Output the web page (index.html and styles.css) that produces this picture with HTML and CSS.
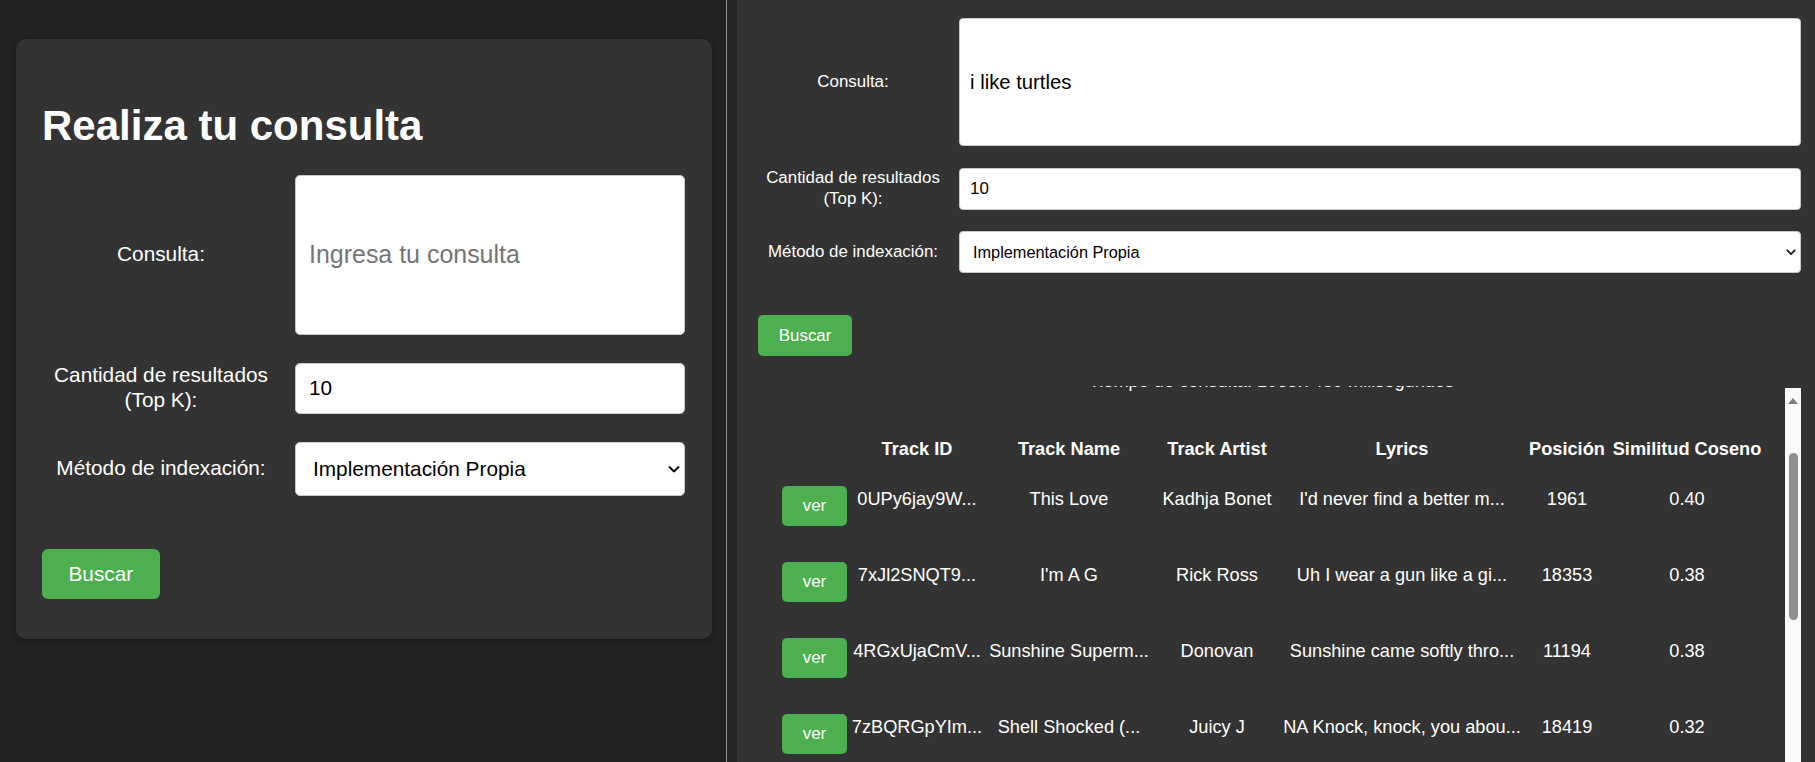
FILE: index.html
```html
<!DOCTYPE html>
<html lang="es">
<head>
<meta charset="utf-8">
<title>Realiza tu consulta</title>
<link rel="stylesheet" href="styles.css">
</head>
<body>
<div class="app">
  <section class="pane-left">
    <div class="card">
      <h1 class="card-title">Realiza tu consulta</h1>
      <form class="form form-lg">
        <label class="form-label" for="q1">Consulta:</label>
        <input class="field field-query" id="q1" type="text" placeholder="Ingresa tu consulta">
        <label class="form-label" for="k1">Cantidad de resultados (Top K):</label>
        <input class="field" id="k1" type="text" value="10">
        <label class="form-label" for="m1">Método de indexación:</label>
        <div class="select-wrap">
          <select class="field field-select" id="m1"><option>Implementación Propia</option></select>
          <svg class="chevron chevron-lg" viewBox="0 0 12 7" aria-hidden="true"><path d="M1 1l5 5 5-5" fill="none" stroke="#111" stroke-width="2"/></svg>
        </div>
      </form>
      <button class="btn btn-lg" type="button">Buscar</button>
    </div>
  </section>
  <div class="divider"></div>
  <div class="gutter"></div>
  <section class="pane-right">
    <form class="form form-sm">
      <label class="form-label" for="q2">Consulta:</label>
      <input class="field field-query" id="q2" type="text" value="i like turtles">
      <label class="form-label" for="k2">Cantidad de resultados (Top K):</label>
      <input class="field" id="k2" type="text" value="10">
      <label class="form-label" for="m2">Método de indexación:</label>
      <div class="select-wrap">
        <select class="field field-select" id="m2"><option>Implementación Propia</option></select>
        <svg class="chevron chevron-sm" viewBox="0 0 12 7" aria-hidden="true"><path d="M1 1l5 5 5-5" fill="none" stroke="#111" stroke-width="2"/></svg>
      </div>
    </form>
    <button class="btn btn-sm" type="button">Buscar</button>
    <div class="results">
      <p class="timing">Tiempo de consulta: 1068.7459 milisegundos</p>
      <table class="results-table">
        <colgroup>
          <col class="col-action">
          <col class="col-id">
          <col class="col-name">
          <col class="col-artist">
          <col class="col-lyrics">
          <col class="col-pos">
          <col class="col-sim">
        </colgroup>
        <thead>
          <tr><th></th><th>Track ID</th><th>Track Name</th><th>Track Artist</th><th>Lyrics</th><th>Posición</th><th>Similitud Coseno</th></tr>
        </thead>
        <tbody>
          <tr><td><button class="btn btn-view" type="button">ver</button></td><td>0UPy6jay9W...</td><td>This Love</td><td>Kadhja Bonet</td><td>I'd never find a better m...</td><td>1961</td><td>0.40</td></tr>
          <tr><td><button class="btn btn-view" type="button">ver</button></td><td>7xJl2SNQT9...</td><td>I'm A G</td><td>Rick Ross</td><td>Uh I wear a gun like a gi...</td><td>18353</td><td>0.38</td></tr>
          <tr><td><button class="btn btn-view" type="button">ver</button></td><td>4RGxUjaCmV...</td><td>Sunshine Superm...</td><td>Donovan</td><td>Sunshine came softly thro...</td><td>11194</td><td>0.38</td></tr>
          <tr><td><button class="btn btn-view" type="button">ver</button></td><td>7zBQRGpYIm...</td><td>Shell Shocked (...</td><td>Juicy J</td><td>NA Knock, knock, you abou...</td><td>18419</td><td>0.32</td></tr>
        </tbody>
      </table>
      <div class="scrollbar" aria-hidden="true">
        <span class="scrollbar-arrow"></span>
        <span class="scrollbar-thumb"></span>
      </div>
    </div>
  </section>
</div>
</body>
</html>
```

FILE: styles.css
```css
* { box-sizing: border-box; }

html, body {
  margin: 0;
  height: 100%;
}

body {
  background: #232323;
  color: #fff;
  font-family: "Liberation Sans", Arial, sans-serif;
  overflow: hidden;
}

.app {
  display: flex;
  height: 100vh;
}

/* ---------- left pane ---------- */
.pane-left {
  width: 726px;
  flex: none;
  padding: 39px 14px 0 16px;
}

.divider {
  width: 1px;
  flex: none;
  background: #8c8c8c;
}

.gutter {
  width: 10px;
  flex: none;
  background: #272727;
}

.card {
  background: #333333;
  border-radius: 10px;
  box-shadow: 0 2px 10px rgba(0, 0, 0, 0.35);
  padding: 62.5px 27px 40px 26px;
}

.card-title {
  margin: 0 0 25.3px;
  font-size: 42px;
  font-weight: bold;
  line-height: normal;
}

/* ---------- forms ---------- */
.form {
  display: grid;
  align-items: center;
}

.form-lg {
  grid-template-columns: 238px 1fr;
  grid-template-rows: 160px 51px 54px;
  column-gap: 15px;
  row-gap: 28px;
  font-size: 20.8px;
}

.form-sm {
  grid-template-columns: 190px 1fr;
  grid-template-rows: 128px 42px 42px;
  column-gap: 11px;
  row-gap: 21.5px;
  font-size: 16.9px;
}

.form-label {
  text-align: center;
  line-height: 1.2;
}

.field {
  display: block;
  width: 100%;
  height: 100%;
  margin: 0;
  background: #fff;
  color: #000;
  border: 1px solid #c8c8c8;
  font-family: inherit;
  font-size: inherit;
  outline: none;
}

.form-lg .field {
  border-radius: 5px;
  padding: 0 13px;
}

.form-sm .field {
  border-radius: 4px;
  padding: 0 10px;
}

.field-query {
  font-size: 1.2em;
}

.field::placeholder {
  color: #757575;
}

.select-wrap {
  position: relative;
  height: 100%;
}

.field-select {
  -webkit-appearance: none;
  appearance: none;
}

.form-lg .field-select {
  padding-left: 17px;
}

.form-sm .field-select {
  padding-left: 13px;
  font-size: 16.3px;
}

.chevron {
  position: absolute;
  top: 50%;
  transform: translateY(-50%);
  pointer-events: none;
}

.chevron-lg {
  right: 5px;
  width: 12px;
  height: 7px;
}

.chevron-sm {
  right: 5px;
  width: 10px;
  height: 6px;
}

/* ---------- buttons ---------- */
.btn {
  display: block;
  background: #4caf50;
  color: #fff;
  border: none;
  border-radius: 5px;
  font-family: inherit;
  line-height: normal;
  cursor: pointer;
}

.btn-lg {
  margin-top: 53px;
  height: 50px;
  padding: 0 26.5px;
  font-size: 20.8px;
  border-radius: 6px;
}

.btn-sm {
  align-self: flex-start;
  margin-top: 42px;
  height: 41px;
  padding: 0 20.8px;
  font-size: 16.9px;
}

.btn-view {
  margin: 13px auto 0;
  height: 40px;
  padding: 0 20.8px;
  font-size: 16.9px;
}

/* ---------- right pane ---------- */
.pane-right {
  flex: 1;
  min-width: 0;
  background: #333333;
  padding: 18px 14px 0 21px;
  display: flex;
  flex-direction: column;
}

.results {
  position: relative;
  flex: 1;
  min-height: 0;
  overflow: hidden;
  margin-top: 30px;
  padding-right: 16px;
}

.timing {
  margin: -15px 0 46px;
  text-align: center;
  font-size: 18.2px;
  line-height: normal;
}

.results-table {
  margin: 0 auto;
  width: 987px;
  table-layout: fixed;
  border-collapse: collapse;
  font-size: 18.2px;
}

.col-action { width: 73px; }
.col-id { width: 132px; }
.col-name { width: 172px; }
.col-artist { width: 124px; }
.col-lyrics { width: 246px; }
.col-pos { width: 84px; }
.col-sim { width: 156px; }

.results-table th {
  padding: 1.25px 0;
  font-weight: bold;
  line-height: normal;
  text-align: center;
  white-space: nowrap;
}

.results-table td {
  height: 76px;
  padding: 0;
  line-height: normal;
  text-align: center;
  vertical-align: middle;
  white-space: nowrap;
}

/* ---------- drawn scrollbar ---------- */
.scrollbar {
  position: absolute;
  top: 2px;
  right: 0;
  bottom: 0;
  width: 16px;
  background: #f9f9f9;
}

.scrollbar-arrow {
  position: absolute;
  top: 10px;
  left: 3px;
  width: 0;
  height: 0;
  border-left: 5px solid transparent;
  border-right: 5px solid transparent;
  border-bottom: 6px solid #7c7c7c;
}

.scrollbar-thumb {
  position: absolute;
  top: 65px;
  left: 3.5px;
  width: 9px;
  height: 167px;
  background: #8f8f8f;
  border-radius: 5px;
}
```
